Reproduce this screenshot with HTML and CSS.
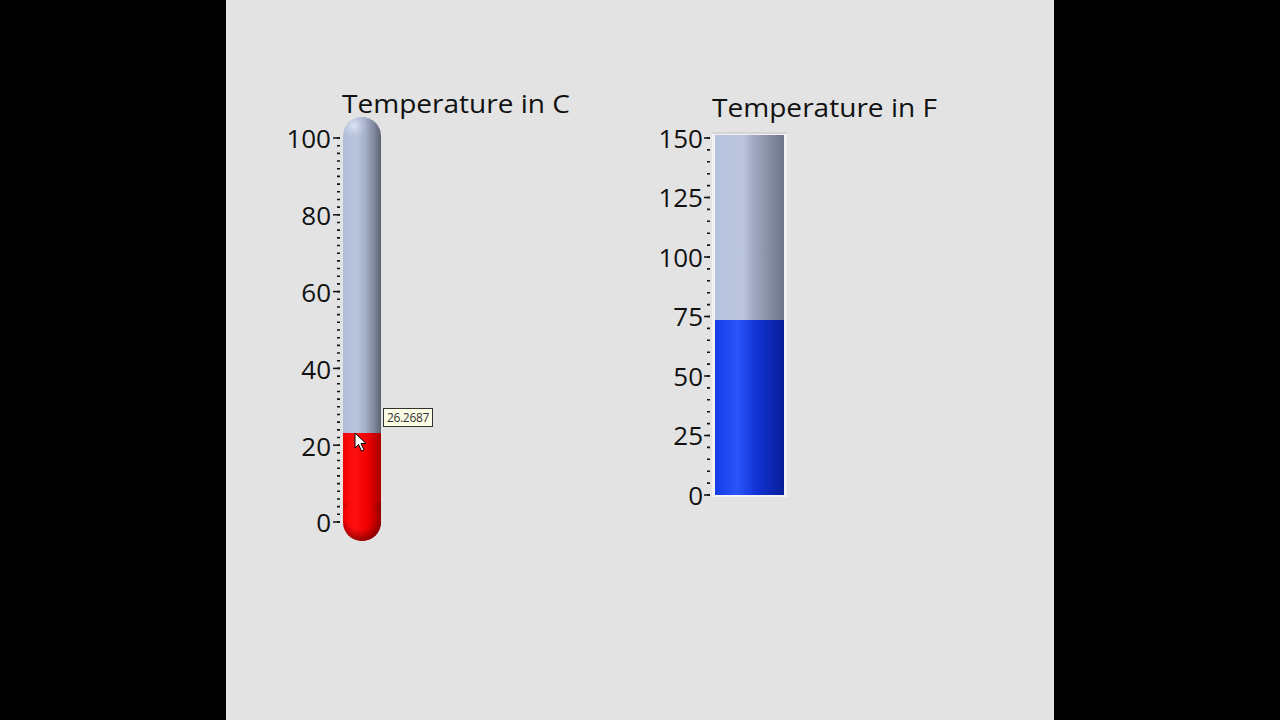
FILE: index.html
```html
<!DOCTYPE html>
<html>
<head>
<meta charset="utf-8">
<link rel="stylesheet" href="styles.css">
</head>
<body>
<div class="screen">
  <div class="panel">
    <div class="gauge gauge-c">
      <svg width="180" height="470" viewBox="0 0 180 470">
        <defs>
          <linearGradient id="tubeGray" x1="0" x2="1" y1="0" y2="0">
            <stop offset="0" stop-color="#b2bdd9"/>
            <stop offset="0.35" stop-color="#b9c4de"/>
            <stop offset="0.6" stop-color="#a3adc6"/>
            <stop offset="0.85" stop-color="#7a8296"/>
            <stop offset="1" stop-color="#5c6272"/>
          </linearGradient>
          <linearGradient id="tubeRed" x1="0" x2="1" y1="0" y2="0">
            <stop offset="0" stop-color="#f20000"/>
            <stop offset="0.3" stop-color="#ff1010"/>
            <stop offset="0.65" stop-color="#f00000"/>
            <stop offset="1" stop-color="#a80000"/>
          </linearGradient>
          <radialGradient id="bulbShade" cx="0.45" cy="0.3" r="0.7">
            <stop offset="0.55" stop-color="#800000" stop-opacity="0"/>
            <stop offset="1" stop-color="#700000" stop-opacity="0.75"/>
          </radialGradient>
          <radialGradient id="capShine" cx="0.35" cy="0.35" r="0.5">
            <stop offset="0" stop-color="#e4e9f5" stop-opacity="0.9"/>
            <stop offset="1" stop-color="#b9c4de" stop-opacity="0"/>
          </radialGradient>
          <clipPath id="tubeClip">
            <rect x="63" y="37" width="38" height="424" rx="19" ry="19"/>
          </clipPath>
        </defs>
        <text class="title" x="62" y="33" textLength="228" lengthAdjust="spacingAndGlyphs">Temperature in C</text>
        <g class="labels">
          <text x="51" y="67.5">100</text>
          <text x="51" y="144.5">80</text>
          <text x="51" y="221.5">60</text>
          <text x="51" y="298.5">40</text>
          <text x="51" y="375.5">20</text>
          <text x="51" y="451.5">0</text>
        </g>
        <line class="minor" x1="58.5" y1="57.2" x2="58.5" y2="443" stroke-dasharray="1.6 6.08"/>
        <g class="major">
          <line x1="53" y1="58" x2="60" y2="58"/>
          <line x1="53" y1="134.8" x2="60" y2="134.8"/>
          <line x1="53" y1="211.6" x2="60" y2="211.6"/>
          <line x1="53" y1="288.4" x2="60" y2="288.4"/>
          <line x1="53" y1="365.2" x2="60" y2="365.2"/>
          <line x1="53" y1="442" x2="60" y2="442"/>
        </g>
        <g clip-path="url(#tubeClip)">
          <rect x="63" y="37" width="38" height="424" fill="url(#tubeGray)"/>
          <circle cx="78" cy="50" r="14" fill="url(#capShine)"/>
          <rect x="63" y="353" width="38" height="108" fill="url(#tubeRed)"/>
          <rect x="63" y="423" width="38" height="38" fill="url(#bulbShade)"/>
        </g>
        <rect class="tip" x="103.5" y="328.5" width="49" height="18"/>
        <text class="tiptext" x="128" y="342">26.2687</text>
        <path class="cursor" d="M75 353 L75 368 L78.5 364.5 L81.5 371 L84 370 L81 363.5 L86 363.5 Z"/>
      </svg>
    </div>
    <div class="gauge gauge-f">
      <svg width="320" height="440" viewBox="0 0 320 440">
        <defs>
          <linearGradient id="barGray" x1="0" x2="1" y1="0" y2="0">
            <stop offset="0" stop-color="#b6c1de"/>
            <stop offset="0.4" stop-color="#bcc6dd"/>
            <stop offset="0.55" stop-color="#a1aac2"/>
            <stop offset="1" stop-color="#6e7689"/>
          </linearGradient>
          <linearGradient id="barBlue" x1="0" x2="1" y1="0" y2="0">
            <stop offset="0" stop-color="#153ce8"/>
            <stop offset="0.32" stop-color="#2a55fa"/>
            <stop offset="0.6" stop-color="#1234d6"/>
            <stop offset="1" stop-color="#081d98"/>
          </linearGradient>
        </defs>
        <text class="title" x="72" y="37" textLength="225" lengthAdjust="spacingAndGlyphs">Temperature in F</text>
        <g class="labels">
          <text x="63" y="67.5">150</text>
          <text x="63" y="127">125</text>
          <text x="63" y="186.5">100</text>
          <text x="63" y="245.5">75</text>
          <text x="63" y="305.5">50</text>
          <text x="63" y="364.5">25</text>
          <text x="63" y="424.5">0</text>
        </g>
        <line class="minor" x1="68.5" y1="57.2" x2="68.5" y2="416" stroke-dasharray="1.6 10.3"/>
        <g class="major">
          <line x1="64" y1="58" x2="70" y2="58"/>
          <line x1="64" y1="117.5" x2="70" y2="117.5"/>
          <line x1="64" y1="177" x2="70" y2="177"/>
          <line x1="64" y1="236.5" x2="70" y2="236.5"/>
          <line x1="64" y1="296" x2="70" y2="296"/>
          <line x1="64" y1="355.5" x2="70" y2="355.5"/>
          <line x1="64" y1="415" x2="70" y2="415"/>
        </g>
        <rect x="72" y="52" width="75" height="365" fill="#f2f2f4"/>
        <rect x="72" y="52" width="75" height="2" fill="#d4d4d6"/>
        <rect x="75" y="55" width="69" height="360" fill="url(#barGray)"/>
        <rect x="75" y="240" width="69" height="175" fill="url(#barBlue)"/>
      </svg>
    </div>
  </div>
</div>
</body>
</html>
```

FILE: styles.css
```css
html, body {
  margin: 0;
  padding: 0;
  background: #000;
}
.screen {
  width: 1280px;
  height: 720px;
  display: flex;
  justify-content: flex-start;
  background: #000;
}
.panel {
  position: relative;
  margin-left: 226px;
  width: 828px;
  height: 720px;
  background: #e3e3e3;
  font-family: "Open Sans", "Noto Sans", sans-serif;
}
.gauge {
  position: absolute;
  top: 80px;
}
.gauge svg {
  display: block;
  overflow: visible;
}
.gauge-c {
  left: 54px;
}
.gauge-f {
  left: 414px;
}
.title {
  font-family: "Open Sans", "Noto Sans", sans-serif;
  font-size: 26px;
  fill: #111;
}
.labels text {
  font-family: "Open Sans", "Noto Sans", sans-serif;
  font-size: 26px;
  fill: #111;
  text-anchor: end;
}
.minor {
  stroke: #111;
  stroke-width: 3;
}
.major line {
  stroke: #111;
  stroke-width: 1.5;
}
.tip {
  fill: #fdfde6;
  stroke: #333;
  stroke-width: 1;
}
.tiptext {
  font-family: "Open Sans", "Noto Sans", sans-serif;
  font-size: 12px;
  fill: #333;
  text-anchor: middle;
  letter-spacing: -0.3px;
}
.cursor {
  fill: #fff;
  stroke: #000;
  stroke-width: 1;
  stroke-linejoin: miter;
}
```
